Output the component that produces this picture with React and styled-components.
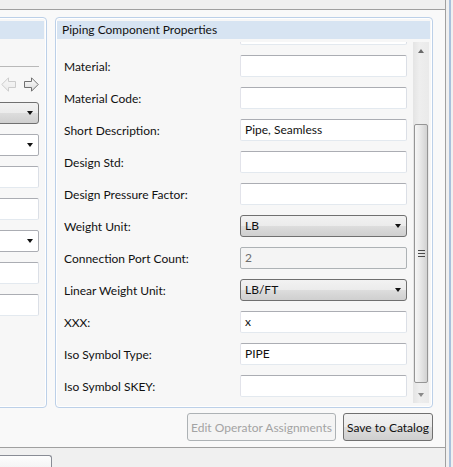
import React from 'react';
import styled, { createGlobalStyle } from 'styled-components';

const GlobalStyle = createGlobalStyle`
  html, body {
    margin: 0;
    padding: 0;
    background: #f0f0f0;
    overflow: hidden;
  }
  body {
    font-family: 'Segoe UI', Lato, 'Liberation Sans', sans-serif;
    font-size: 12px;
    color: #111111;
  }
  * {
    box-sizing: border-box;
  }
`;

const Window = styled.div`
  display: flex;
  width: 453px;
  height: 467px;
  overflow: hidden;
`;

const Main = styled.div`
  width: 446px;
  display: flex;
  flex-direction: column;
  border-right: 1px solid #a0a0a0;
`;

const Gutter = styled.div`
  flex: 1;
  padding-left: 3px;
  background: #f0f0f0;
  & > div {
    width: 2px;
    height: 100%;
    background: #a9c0dc;
  }
`;

const TopStrip = styled.div`
  flex-shrink: 0;
  height: 9px;
  background: #f0f0f0;
`;

const Content = styled.div`
  flex-shrink: 0;
  height: 439px;
  background: #f9f9f9;
  border-top: 1px solid #a0a0a0;
  border-bottom: 1px solid #a0a0a0;
  padding-top: 7px;
  display: flex;
  flex-direction: column;
`;

const PanelsRow = styled.div`
  display: flex;
  gap: 8px;
`;

const Panel = styled.div`
  width: ${p => p.width}px;
  margin-left: ${p => p.offset || 0}px;
  height: 391px;
  border: 1px solid #bcd0e8;
  border-radius: 4px;
  box-shadow: inset 0 0 0 1px #ffffff;
  background: #f7f7f7;
  padding: 3px 2px 3px 1px;
  display: flex;
  flex-direction: column;
  overflow: hidden;
`;

const PanelHeader = styled.div`
  height: 18px;
  line-height: 18px;
  background: #d7e4f2;
  padding-left: 5px;
  color: #111;
  white-space: nowrap;
  overflow: hidden;
`;

/* left panel (cut off by the window edge) */

const LeftBody = styled.div`
  display: flex;
  flex-direction: column;
  padding-right: 5px;
`;

const Separator = styled.div`
  margin-top: 27px;
  height: 1px;
  background: #b9b9b9;
`;

const NavRow = styled.div`
  margin-top: 10px;
  height: 15px;
  display: flex;
  justify-content: flex-end;
  gap: 8px;
`;

const LeftList = styled.div`
  margin-top: 10px;
  display: flex;
  flex-direction: column;
  gap: 10px;
`;

/* inputs */

const TextBox = styled.div`
  flex-shrink: 0;
  width: ${p => (p.width ? `${p.width}px` : '100%')};
  height: 22px;
  line-height: 20px;
  padding: 0 4px;
  border: 1px solid;
  border-color: #abadb3 #dbdfe6 #e3e9ef #e2e3ea;
  border-radius: 2px;
  background: ${p => (p.disabled ? '#f4f4f4' : '#ffffff')};
  color: ${p => (p.disabled ? '#6d6d6d' : '#111')};
  ${p => p.disabled && 'border-color: #adb2b5;'}
  white-space: nowrap;
  overflow: hidden;
`;

const Combo = styled.div`
  flex-shrink: 0;
  position: relative;
  width: ${p => (p.width ? `${p.width}px` : '100%')};
  height: 22px;
  line-height: 20px;
  padding: 0 4px;
  border: 1px solid ${p => (p.editable ? '#abadb3' : '#707070')};
  border-radius: ${p => (p.editable ? 2 : 3)}px;
  background: ${p =>
    p.editable
      ? '#ffffff'
      : 'linear-gradient(#f2f2f2 0%, #ebebeb 50%, #dddddd 50%, #cfcfcf 100%)'};
  color: #111;
  &::after {
    content: '';
    position: absolute;
    right: 5px;
    top: 8px;
    border-left: 3.5px solid transparent;
    border-right: 3.5px solid transparent;
    border-top: 4px solid #111;
  }
`;

/* right panel */

const Body = styled.div`
  margin-top: 3px;
  height: 361px;
  display: flex;
`;

const Viewport = styled.div`
  flex: 1;
  overflow: hidden;
`;

const FieldList = styled.div`
  margin-top: -24px;
`;

const Row = styled.div`
  height: 32px;
  display: flex;
  align-items: center;
  padding-left: 7px;
  padding-right: 6px;
`;

const Label = styled.div`
  flex: 1;
  white-space: nowrap;
`;

const ScrollBar = styled.div`
  width: 16px;
  margin-right: 1px;
  background: linear-gradient(to right, #e4e4e4, #eeeeee 40%, #eaeaea);
  display: flex;
  flex-direction: column;
`;

const ScrollArrow = styled.div`
  height: 17px;
  display: flex;
  align-items: center;
  justify-content: center;
  &::before {
    content: '';
    border-left: 3.5px solid transparent;
    border-right: 3.5px solid transparent;
    ${p =>
      p.down
        ? 'border-top: 4px solid #8a8a8a;'
        : 'border-bottom: 4px solid #6a6a6a;'}
  }
`;

const Track = styled.div`
  flex: 1;
  padding: 0 1px;
`;

const Thumb = styled.div`
  margin-top: ${p => p.top}px;
  height: ${p => p.size}px;
  border: 1px solid #959595;
  border-radius: 2px;
  background: linear-gradient(to right, #f6f6f6, #e8e8e8 45%, #d2d2d2);
  display: flex;
  align-items: center;
  justify-content: center;
`;

const Grip = styled.div`
  width: 7px;
  height: 7px;
  background: repeating-linear-gradient(
    to bottom,
    #4a4a4a 0,
    #4a4a4a 1px,
    transparent 1px,
    transparent 3px
  );
`;

/* buttons */

const ButtonRow = styled.div`
  margin-top: 5px;
  display: flex;
  justify-content: flex-end;
  gap: 7px;
  padding-right: 12px;
`;

const Button = styled.div`
  width: ${p => p.width}px;
  height: 28px;
  display: flex;
  align-items: center;
  justify-content: center;
  border-radius: 3px;
  white-space: nowrap;
  border: 1px solid ${p => (p.disabled ? '#adb2b5' : '#707070')};
  background: ${p =>
    p.disabled
      ? '#f4f4f4'
      : 'linear-gradient(#f2f2f2 0%, #ebebeb 50%, #dddddd 50%, #cfcfcf 100%)'};
  color: ${p => (p.disabled ? '#a3a3a3' : '#111')};
`;

const BottomStrip = styled.div`
  flex: 1;
  min-height: 0;
  overflow: hidden;
  background: #f0f0f0;
  padding-top: 7px;
`;

const Tab = styled.div`
  width: 52px;
  height: 20px;
  border: 1px solid #898c95;
  border-left: none;
  border-bottom: none;
  border-radius: 0 3px 0 0;
  background: linear-gradient(#fdfdfd, #eeeeee);
`;

const NavArrow = ({ left, disabled }) => (
  <svg
    width="15"
    height="15"
    viewBox="0 0 15 15"
    style={{ transform: left ? 'scaleX(-1)' : 'none' }}
  >
    <defs>
      <linearGradient id={`ag${disabled ? 'd' : 'e'}`} x1="0" y1="0" x2="0" y2="1">
        <stop offset="0" stopColor={disabled ? '#f6f6f6' : '#ffffff'} />
        <stop offset="1" stopColor={disabled ? '#ececec' : '#d8d8d8'} />
      </linearGradient>
    </defs>
    <polygon
      points="0.5,4.5 7.5,4.5 7.5,0.8 14.2,7.5 7.5,14.2 7.5,10.5 0.5,10.5"
      fill={`url(#ag${disabled ? 'd' : 'e'})`}
      stroke={disabled ? '#cccccc' : '#707070'}
      strokeWidth="1"
      strokeLinejoin="round"
    />
  </svg>
);

// first row is scrolled mostly out of view, only its box edge shows
const fields = [
  { label: '', type: 'text', value: '' },
  { label: 'Material:', type: 'text', value: '' },
  { label: 'Material Code:', type: 'text', value: '' },
  { label: 'Short Description:', type: 'text', value: 'Pipe, Seamless' },
  { label: 'Design Std:', type: 'text', value: '' },
  { label: 'Design Pressure Factor:', type: 'text', value: '' },
  { label: 'Weight Unit:', type: 'combo', value: 'LB' },
  { label: 'Connection Port Count:', type: 'disabled', value: '2' },
  { label: 'Linear Weight Unit:', type: 'combo', value: 'LB/FT' },
  { label: 'XXX:', type: 'text', value: 'x' },
  { label: 'Iso Symbol Type:', type: 'text', value: 'PIPE' },
  { label: 'Iso Symbol SKEY:', type: 'text', value: '' },
];

const leftRows = ['combo', 'editable', 'text', 'text', 'editable', 'text', 'text'];

export default function App() {
  return (
    <>
      <GlobalStyle />
      <Window>
        <Main>
          <TopStrip />
          <Content>
            <PanelsRow>
              <Panel width={53} offset={-6}>
                <PanelHeader />
                <LeftBody>
                  <Separator />
                  <NavRow>
                    <NavArrow left disabled />
                    <NavArrow />
                  </NavRow>
                  <LeftList>
                    {leftRows.map((t, i) =>
                      t === 'text' ? (
                        <TextBox key={i} />
                      ) : (
                        <Combo key={i} editable={t === 'editable'} />
                      ),
                    )}
                  </LeftList>
                </LeftBody>
              </Panel>
              <Panel width={378}>
                <PanelHeader>Piping Component Properties</PanelHeader>
                <Body>
                  <Viewport>
                    <FieldList>
                      {fields.map((f, i) => (
                        <Row key={i}>
                          <Label>{f.label}</Label>
                          {f.type === 'combo' ? (
                            <Combo width={167}>{f.value}</Combo>
                          ) : (
                            <TextBox width={167} disabled={f.type === 'disabled'}>
                              {f.value}
                            </TextBox>
                          )}
                        </Row>
                      ))}
                    </FieldList>
                  </Viewport>
                  <ScrollBar>
                    <ScrollArrow />
                    <Track>
                      <Thumb top={65} size={259}>
                        <Grip />
                      </Thumb>
                    </Track>
                    <ScrollArrow down />
                  </ScrollBar>
                </Body>
              </Panel>
            </PanelsRow>
            <ButtonRow>
              <Button width={149} disabled>
                Edit Operator Assignments
              </Button>
              <Button width={90}>Save to Catalog</Button>
            </ButtonRow>
          </Content>
          <BottomStrip>
            <Tab />
          </BottomStrip>
        </Main>
        <Gutter>
          <div />
        </Gutter>
      </Window>
    </>
  );
}
